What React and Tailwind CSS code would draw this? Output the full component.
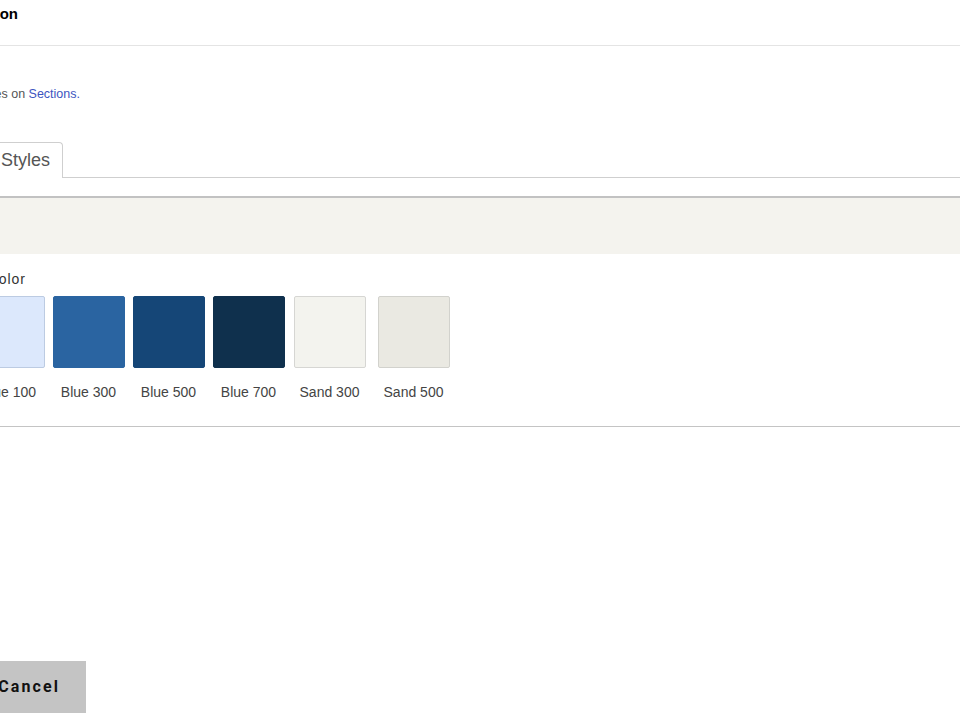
const swatches = [
  { name: 'Blue 100', bg: 'bg-[#dce8fc]', border: 'border-[#bccbe2]' },
  { name: 'Blue 300', bg: 'bg-[#2a64a1]', border: 'border-[#2a64a1]' },
  { name: 'Blue 500', bg: 'bg-[#154677]', border: 'border-[#154677]' },
  { name: 'Blue 700', bg: 'bg-[#0f304d]', border: 'border-[#0f304d]' },
  { name: 'Sand 300', bg: 'bg-[#f3f3ee]', border: 'border-[#d6d6d3]', extra: 'ml-[1px]' },
  { name: 'Sand 500', bg: 'bg-[#eae9e2]', border: 'border-[#d2d2cd]', extra: 'ml-[4px]' },
];

export default function App() {
  return (
    <div className="w-[960px] h-[720px] overflow-hidden bg-white font-['Liberation_Sans',Arial,sans-serif]">
      {/* header */}
      <div className="h-[46px] border-b border-[#e4e4e4] pt-[5px]">
        <div className="w-[18px] flex justify-end whitespace-nowrap text-[15px] leading-[18px] font-bold text-black">
          Edit Section
        </div>
      </div>

      <div className="mt-[41px] w-[80px] flex justify-end whitespace-nowrap text-[12.5px] leading-[14px] text-[#555]">
        <span>
          Learn more about styles on <span className="text-[#3d55c0]">Sections.</span>
        </span>
      </div>

      {/* tabs */}
      <div className="mt-[41px] flex h-[36px]">
        <div className="w-[63px] shrink-0 border-t border-r border-[#cfcfcf] rounded-tr-[4px] flex justify-end items-center pr-[12px] whitespace-nowrap text-[18px] text-[#555]">
          Content Styles
        </div>
        <div className="flex-1 border-b border-[#cfcfcf]" />
      </div>

      <div className="mt-[18px] h-[58px] border-t-2 border-[#c2c2c2] bg-[#f4f3ee]" />

      <div className="mt-[17px] w-[26px] flex justify-end whitespace-nowrap text-[14px] leading-[16px] tracking-[1px] text-[#333]">
        Background Color
      </div>

      <div className="mt-[9px] flex gap-[9px] -ml-[27px]">
        {swatches.map((s) => (
          <div key={s.name} className={`w-[71px] flex flex-col items-center ${s.extra || ''}`}>
            <div className={`w-[72px] h-[72px] rounded-[2px] border ${s.bg} ${s.border}`} />
            <div className="mt-[16px] whitespace-nowrap text-[14px] leading-[16px] text-[#444]">{s.name}</div>
          </div>
        ))}
      </div>

      <div className="mt-[26px] border-t border-[#c4c4c4]" />

      <div className="mt-[234px] w-[86px] h-[52px] bg-[#c4c4c4] flex items-center justify-end pr-[26px] whitespace-nowrap text-[16px] font-bold tracking-[0.13em] text-[#111] font-['Roboto',Arial,sans-serif]">
        Cancel
      </div>
    </div>
  );
}
